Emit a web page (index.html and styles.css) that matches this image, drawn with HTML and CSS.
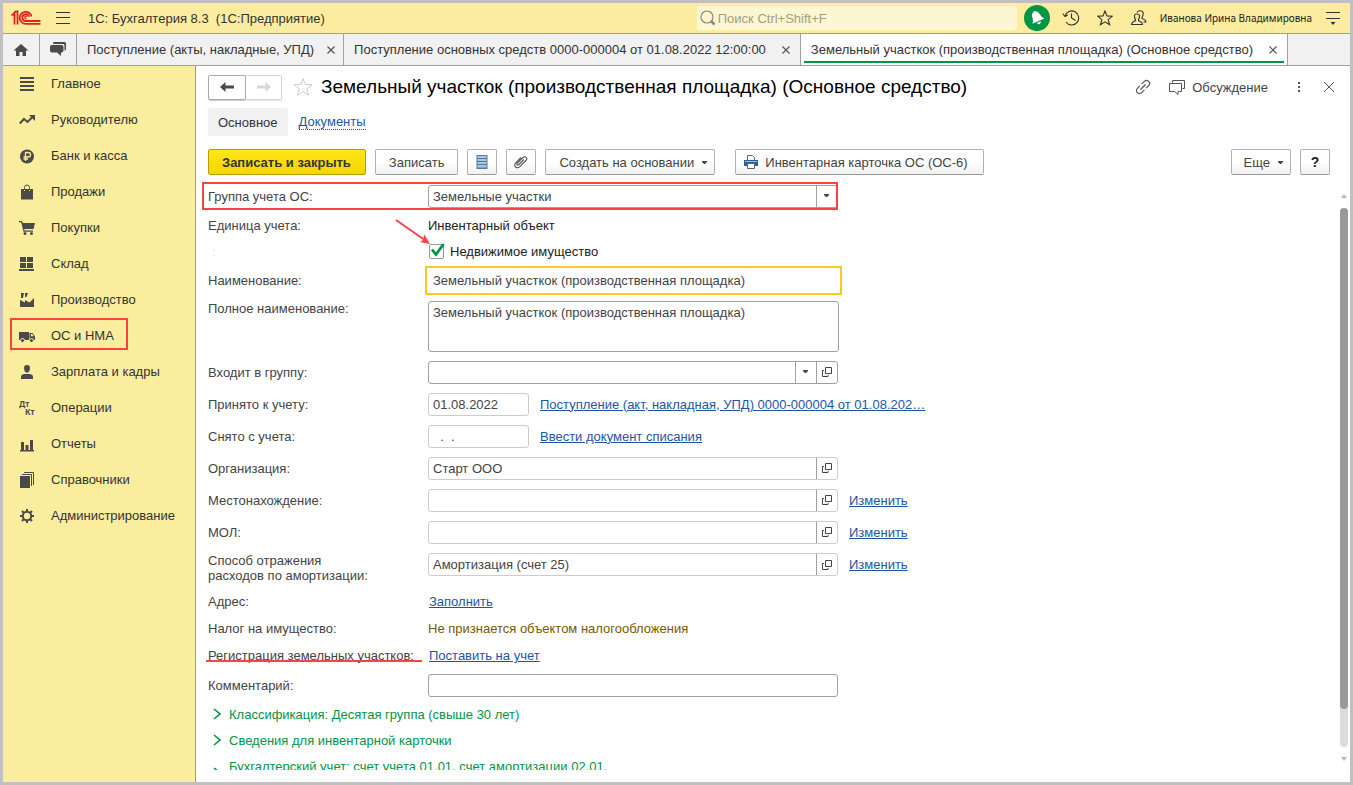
FILE: index.html
```
<!DOCTYPE html>
<html lang="ru">
<head>
<meta charset="utf-8">
<title>1С: Бухгалтерия 8.3</title>
<link rel="stylesheet" href="styles.css">
</head>
<body>
<svg class="defs" width="0" height="0" aria-hidden="true">
  <symbol id="open" viewBox="0 0 10 10"><path d="M3.500.5h6v6h-6zM2 3.500H.5v6h5.500V8" fill="none" stroke="#444"/></symbol>
  <symbol id="caret" viewBox="0 0 6 4"><path d="M0 0h5v1L3 3H2L0 1z" fill="#444"/></symbol>
  <symbol id="cross" viewBox="0 0 8 8"><path d="M.5.5l7 7M7.500.5l-7 7" fill="none" stroke="#555" stroke-width="1.200"/></symbol>
  <symbol id="chevron" viewBox="0 0 8 12"><path d="M1 1l6 5-6 5" fill="none" stroke="#009646" stroke-width="1.600"/></symbol>
</svg>
<div class="window">
  <header class="topbar">
    <svg class="logo" width="30" height="16" viewBox="0 0 30 16"><g fill="none" stroke="#e0211d" stroke-width="1.800"><path d="M.3 4.800H3.500V14.500M6.500 14.500V1.500H4.800L2 4"/><path d="M20.500 6.500A6 6 0 1 0 15 13.800h14.500M18 6.800A3.400 3.400 0 1 0 15 11h14.500"/><path d="M16 6.800a1.200 1.200 0 1 0-.5 1.700" stroke-width="1.200"/></g></svg>
    <button class="icon-btn menu" aria-label="Меню"><svg width="14" height="12" viewBox="0 0 14 12"><path d="M0 .5h14M0 5.500h14M0 11.500h14" stroke="#333"/></svg></button>
    <div class="app-name">1С: Бухгалтерия 8.3&nbsp; (1С:Предприятие)</div>
    <label class="search"><svg width="16" height="16" viewBox="0 0 16 16"><circle cx="7" cy="7" r="6" fill="none" stroke="#8d8873" stroke-width="1.200"/><path d="M11 11l3.500 3.500" stroke="#8d8873" stroke-width="2.500"/></svg><input type="text" aria-label="Поиск" placeholder="Поиск Ctrl+Shift+F"></label>
    <button class="icon-btn bell" aria-label="Уведомления"><svg width="26" height="26" viewBox="0 0 26 26"><circle cx="13" cy="13" r="13" fill="#009646"/><g fill="#fff" transform="rotate(-24 13 13)"><path d="M12 6.200q1-1.400 2 0 2.700.8 3 4.300.3 3.500 2.500 6H6.500q2.200-2.500 2.500-6 .3-3.500 3-4.300z"/><path d="M11 17.500h4q-.3 2-2 2t-2-2z"/></g></svg></button>
    <button class="icon-btn" aria-label="История"><svg width="18" height="16" viewBox="0 0 18 16"><g fill="none" stroke="#333" stroke-width="1.100"><path d="M3 6A7 7 0 1 1 4 12M9.500 3.500V8l4 2.500"/><path d="M.8 3.500L3 6.500 5.800 5"/></g></svg></button>
    <button class="icon-btn" aria-label="Избранное"><svg width="16" height="16" viewBox="0 0 16 16"><path d="M8 1l2 4.900 5.300.3-4.100 3.400 1.400 5.200L8 11.900l-4.600 2.900 1.400-5.200L.7 6.200 6 5.900z" fill="none" stroke="#333" stroke-width="1.100"/></svg></button>
    <button class="icon-btn" aria-label="Пользователь"><svg width="18" height="16" viewBox="0 0 18 16"><g fill="none" stroke="#333" stroke-width="1.100"><path d="M1.500 14.500c0-3 3-3 4-4 .5-1-1.500-2-1-5 .3-2 4.700-2 5 0 .4 3-1.500 4-1 5 1 1 4 1 4 4z"/><path d="M7 2.500c1-2.500 6-2.500 6.200.8.200 2.500-1.700 3.700-1.200 5 1 1 4 1 4 3.700h-2.500"/></g></svg></button>
    <div class="user">Иванова Ирина Владимировна</div>
    <button class="icon-btn service" aria-label="Сервис"><svg width="14" height="13" viewBox="0 0 14 13"><path d="M0 .5h14M0 6.500h14" stroke="#333"/><path d="M4.500 10h5L7 13z" fill="#333"/></svg></button>
  </header>

  <nav class="tabs" aria-label="Открытые окна">
    <button class="tab-icon" aria-label="Домой"><svg width="16" height="14" viewBox="0 0 16 14"><path d="M8 1l7.500 6.500H13V13H9.500V9h-3v4H3V7.500H.5z" fill="#4a4a4a"/></svg></button>
    <button class="tab-icon" aria-label="Обсуждения"><svg width="18" height="15" viewBox="0 0 18 15"><path d="M5 0h10.500Q17 0 17 1.500V7q0 1.500-1.500 1.500V3.500Q15.500 2 14 2H4q0-2 1-2z" fill="#4a4a4a"/><path d="M3 3h9.500q2 0 2 2v3.500q0 2-2 2H12V14L8 10.500H3q-2 0-2-2V5q0-2 2-2z" fill="#4a4a4a"/></svg></button>
    <div class="tab short"><span>Поступление (акты, накладные, УПД)</span><button aria-label="Закрыть"><svg width="8" height="8"><use href="#cross"/></svg></button></div>
    <div class="tab"><span>Поступление основных средств 0000-000004 от 01.08.2022 12:00:00</span><button aria-label="Закрыть"><svg width="8" height="8"><use href="#cross"/></svg></button></div>
    <div class="tab active"><span>Земельный участкок (производственная площадка) (Основное средство)</span><button aria-label="Закрыть"><svg width="8" height="8"><use href="#cross"/></svg></button></div>
  </nav>

  <div class="body">
    <nav class="sidebar" aria-label="Разделы">
      <a href="#"><svg viewBox="0 0 16 16"><path d="M1 1h14v2H1zM1 5h14v2H1zM1 9h14v2H1zM1 13h14v2H1z"/></svg>Главное</a>
      <a href="#"><svg viewBox="0 0 16 16"><path d="M.8 11.500L5 7l3.500 3 5-5" fill="none" stroke="#4a4a4a" stroke-width="2"/><path d="M10 3h6v6z"/></svg>Руководителю</a>
      <a href="#"><svg viewBox="0 0 16 16"><circle cx="8" cy="8.500" r="7"/><path d="M6.500 13V4.500h2.800a2.200 2.200 0 0 1 0 4.500H4.500M4.500 11H9" fill="none" stroke="#fbed9e" stroke-width="1.300"/></svg>Банк и касса</a>
      <a href="#"><svg viewBox="0 0 16 16"><path d="M2 5h3v2h1V5h4v2h1V5h3v10.500H2z"/><path d="M5.500 6V3.500a2.500 2.500 0 0 1 5 0V6" fill="none" stroke="#4a4a4a"/></svg>Продажи</a>
      <a href="#"><svg viewBox="0 0 16 16"><path d="M0 1h3l.8 2H16l-1.500 6H5.200l.4 1.500H14v1.200H4.500L2.200 2.200H0z"/><circle cx="6" cy="13.500" r="1.500"/><circle cx="12.500" cy="13.500" r="1.500"/></svg>Покупки</a>
      <a href="#"><svg viewBox="0 0 16 16"><path d="M1 1h6v5H1zM8 1h6v5H8zM1 7h6v5H1zM8 7h6v5H8zM0 13h15v2H0z"/></svg>Склад</a>
      <a href="#"><svg viewBox="0 0 16 16"><path d="M1 15V8l5 2.500V8l4.500 2.500L15 6v9zM2 1h3l-1 5H2zM6 1h3L7.500 5H6z"/></svg>Производство</a>
      <a href="#" class="marked"><svg viewBox="0 0 16 16"><path d="M0 4h10v8H0zM10.500 5h3L16 8.500V12h-5.500z"/><path d="M12 6h1.300l1.500 2.300H12z" fill="#fbed9e"/><g stroke="#fbed9e"><circle cx="3.500" cy="12.500" r="2"/><circle cx="12.500" cy="12.500" r="2"/></g></svg>ОС и НМА</a>
      <a href="#"><svg viewBox="0 0 16 16"><path d="M5 4q0-3 3-3t3 3q0 3-2 4.500H7Q5 7 5 4zM2 15v-2q0-3 4-3h4q4 0 4 3v2z"/></svg>Зарплата и кадры</a>
      <a href="#"><svg viewBox="0 0 16 16"><g class="dtkt"><text x="0" y="7">Дт</text><text x="6" y="15">Кт</text></g></svg>Операции</a>
      <a href="#"><svg viewBox="0 0 16 16"><path d="M1 14h14v1.500H1zM2 6h3v8H2zM6.500 9h3v5h-3zM11 4h3v10h-3z"/></svg>Отчеты</a>
      <a href="#"><svg viewBox="0 0 16 16"><path d="M1 4h10v12H1z"/><path d="M3 2.500h9.500V14M5 .5h9.500V13" fill="none" stroke="#4a4a4a"/></svg>Справочники</a>
      <a href="#"><svg viewBox="0 0 16 16"><circle cx="8" cy="8" r="4.200" fill="none" stroke="#4a4a4a" stroke-width="2"/><path d="M8 1v3M8 12v3M1 8h3M12 8h3M3 3l2 2M11 11l2 2M13 3l-2 2M5 11l-2 2" stroke="#4a4a4a" stroke-width="2"/></svg>Администрирование</a>
    </nav>

    <main class="main">
      <div class="heading">
        <div class="history"><button aria-label="Назад"><svg width="14" height="10" viewBox="0 0 14 10"><path d="M0 5l5.500-5v3.500H14v3H5.500V10z" fill="#4a4a4a"/></svg></button><button class="off" aria-label="Вперед"><svg width="14" height="10" viewBox="0 0 14 10"><path d="M14 5L8.500 0v3.500H0v3h8.500V10z" fill="#d8d8d8"/></svg></button></div>
        <button class="icon-btn" aria-label="В избранное"><svg width="20" height="20" viewBox="0 0 20 20"><path d="M10 1.500l2.300 6 6.700.2-5.200 4 1.800 6.500-5.600-3.700-5.600 3.700 1.800-6.500-5.200-4 6.700-.2z" fill="none" stroke="#ccc"/></svg></button>
        <h1>Земельный участкок (производственная площадка) (Основное средство)</h1>
        <div class="tools">
          <button class="icon-btn" aria-label="Ссылка"><svg width="16" height="16" viewBox="0 0 16 16"><g fill="none" stroke="#555" stroke-width="1.200" transform="rotate(-45 8 8)"><path d="M7 11H3a3 3 0 0 1 0-6h3.500M9 5h4a3 3 0 0 1 0 6H9.500M4.500 8h7"/></g></svg></button>
          <button class="talk"><svg width="16" height="15" viewBox="0 0 16 15"><path d="M3.500 2.500V.5h12v8h-2M.5 3.500h12v8H9v3l-3.500-3h-5z" fill="none" stroke="#555"/></svg>Обсуждение</button>
          <button class="icon-btn dots" aria-label="Еще"><svg width="4" height="12" viewBox="0 0 4 12"><path d="M1 1h2v2H1zM1 5h2v2H1zM1 9h2v2H1z" fill="#555"/></svg></button>
          <button class="icon-btn" aria-label="Закрыть"><svg width="10" height="10" viewBox="0 0 10 10"><path d="M0 0l10 10M10 0L0 10" stroke="#555"/></svg></button>
        </div>
      </div>

      <div class="views"><button>Основное</button><a href="#">Документы</a></div>

      <div class="toolbar">
        <button class="btn primary">Записать и закрыть</button>
        <button class="btn">Записать</button>
        <button class="btn square" aria-label="Список"><svg width="12" height="14" viewBox="0 0 12 14"><path d="M.5 0h11v14H.5z" fill="#56789a"/><path d="M1.500 1h9v2h-9zM1.500 4h9v2h-9zM1.500 7h9v2h-9zM1.500 10h9v2.500h-9z" fill="#a9c7e0"/></svg></button>
        <button class="btn square" aria-label="Файлы"><svg width="14" height="14" viewBox="0 0 14 14"><path d="M10 4.500L5 9.500q-1 1-1.800.2T3.500 8L9 2.500q1.800-1.500 3.200-.2T12 5.500l-6.500 6.300q-2 1.700-3.800.2T1.500 8l5.500-5.500" fill="none" stroke="#555" stroke-width="1.100"/></svg></button>
        <button class="btn create">Создать на основании<svg width="6" height="4"><use href="#caret"/></svg></button>
        <button class="btn card"><svg width="14" height="14" viewBox="0 0 14 14"><path d="M3.500 5V.5h5l2 2V5" fill="#fff" stroke="#567"/><path d="M0 5h14v6H0z" fill="#2f5f8f"/><path d="M1 6h12v1H1z" fill="#9bbcd8"/><path d="M3.500 8.500h7v5h-7z" fill="#fff" stroke="#567"/></svg>Инвентарная карточка ОС (ОС-6)</button>
        <button class="btn more">Еще<svg width="6" height="4"><use href="#caret"/></svg></button>
        <button class="btn help">?</button>
      </div>

      <div class="scroll-area">
        <form class="form">
          <div class="row framed"><label for="grp">Группа учета ОС:</label><div class="field"><select id="grp"><option>Земельные участки</option></select><span class="cell"><svg width="6" height="4"><use href="#caret"/></svg></span></div></div>
          <div class="row unit"><span class="label">Единица учета:</span><span class="dark">Инвентарный объект</span></div>
          <div class="row check"><span class="label faint">:</span><span class="tick"><input type="checkbox" id="realty" checked><svg width="14" height="14" viewBox="0 0 14 14"><path d="M1 6.500l4 5L12.500 1" fill="none" stroke="#009646" stroke-width="2.800"/></svg></span><label class="dark" for="realty">Недвижимое имущество</label><svg class="arrow" width="36" height="28" viewBox="0 0 36 28"><path d="M1 1l28 19.500" stroke="#f94444" stroke-width="2"/><path d="M35 25l-10-2 3.500-2.500L29 15z" fill="#f94444"/></svg></div>
          <div class="row name"><label for="name">Наименование:</label><input class="focused" id="name" type="text" value="Земельный участкок (производственная площадка)"></div>
          <div class="row full"><label for="full">Полное наименование:</label><textarea id="full">Земельный участкок (производственная площадка)</textarea></div>
          <div class="row"><label for="parent">Входит в группу:</label><div class="field"><input id="parent" type="text"><button type="button" class="cell" aria-label="Выбрать"><svg width="6" height="4"><use href="#caret"/></svg></button><button type="button" class="cell" aria-label="Открыть"><svg width="10" height="10"><use href="#open"/></svg></button></div></div>
          <div class="row"><label for="in">Принято к учету:</label><input class="date" id="in" type="text" value="01.08.2022"><a href="#">Поступление (акт, накладная, УПД) 0000-000004 от 01.08.202…</a></div>
          <div class="row"><label for="out">Снято с учета:</label><input class="date" id="out" type="text" value="&nbsp; .&nbsp; ."><a href="#">Ввести документ списания</a></div>
          <div class="row"><label for="org">Организация:</label><div class="field pale"><input id="org" type="text" value="Старт ООО"><button type="button" class="cell" aria-label="Открыть"><svg width="10" height="10"><use href="#open"/></svg></button></div></div>
          <div class="row"><label for="place">Местонахождение:</label><div class="field pale"><input id="place" type="text"><button type="button" class="cell" aria-label="Открыть"><svg width="10" height="10"><use href="#open"/></svg></button></div><a href="#">Изменить</a></div>
          <div class="row"><label for="mol">МОЛ:</label><div class="field pale"><input id="mol" type="text"><button type="button" class="cell" aria-label="Открыть"><svg width="10" height="10"><use href="#open"/></svg></button></div><a href="#">Изменить</a></div>
          <div class="row tall"><label for="way">Способ отражения<br>расходов по амортизации:</label><div class="field pale"><input id="way" type="text" value="Амортизация (счет 25)"><button type="button" class="cell" aria-label="Открыть"><svg width="10" height="10"><use href="#open"/></svg></button></div><a href="#">Изменить</a></div>
          <div class="row low"><span class="label">Адрес:</span><a class="first" href="#">Заполнить</a></div>
          <div class="row low"><span class="label">Налог на имущество:</span><span class="tax">Не признается объектом налогообложения</span></div>
          <div class="row low"><span class="label underlined">Регистрация земельных участков:</span><a class="first" href="#">Поставить на учет</a></div>
          <div class="row"><label for="note">Комментарий:</label><div class="field"><input id="note" type="text"></div></div>
          <button type="button" class="group"><svg width="8" height="12"><use href="#chevron"/></svg>Классификация: Десятая группа (свыше 30 лет)</button>
          <button type="button" class="group"><svg width="8" height="12"><use href="#chevron"/></svg>Сведения для инвентарной карточки</button>
          <button type="button" class="group opening"><svg width="8" height="12"><use href="#chevron"/></svg>Бухгалтерский учет: счет учета 01.01, счет амортизации 02.01,</button>
        </form>
        <div class="scrollbar" aria-hidden="true"><svg width="6" height="4" viewBox="0 0 6 4"><path d="M0 4l3-4 3 4z" fill="#b8b8b8"/></svg><div class="track"><div class="thumb"></div></div><svg width="6" height="4" viewBox="0 0 6 4"><path d="M0 0l3 4 3-4z" fill="#b8b8b8"/></svg></div>
      </div>
    </main>
  </div>
</div>
</body>
</html>
```

FILE: styles.css
```
*, *::before, *::after { box-sizing: border-box; }
body { margin: 0; font: 13px/15px "Liberation Sans", Arial, sans-serif; color: #444; }
button, input, select, textarea { font: inherit; color: inherit; margin: 0; }
button { background: none; border: 0; padding: 0; }
svg { display: block; flex: none; }
.defs { position: absolute; }

.window { height: 100vh; display: flex; flex-direction: column; border: 3px solid #c0c0c0; background: #fff; overflow: hidden; }

.topbar { flex: none; display: flex; align-items: center; height: 31px; padding-right: 10px; background: #fbec9f; border-bottom: 1px solid #a8a07a; }
.logo { margin-left: 8px; }
.icon-btn { display: flex; align-items: center; justify-content: center; flex: none; }
.menu { margin: 0 18px 0 15px; }
.app-name { flex: 1; color: #333; white-space: nowrap; }
.search { display: flex; align-items: center; gap: 2px; width: 320px; height: 24px; padding-left: 3px; background: #fdf6d3; border-radius: 2px; }
.search input { flex: 1; min-width: 0; border: 0; background: none; padding: 0; outline: 0; }
.search input::placeholder { color: #a29d85; opacity: 1; }
.bell { margin: 0 12px 0 7px; }
.bell + .icon-btn { margin-right: 17px; }
.bell + .icon-btn + .icon-btn { margin-right: 17px; }
.user { margin: 0 14px 0 12px; font: 10px/15px "Noto Sans", sans-serif; color: #222; white-space: nowrap; }

.tabs { flex: none; display: flex; height: 32px; background: #f1f1f1; border-bottom: 1px solid #a0a0a0; }
.tab-icon { display: flex; align-items: center; justify-content: center; width: 37px; border-right: 1px solid #a0a0a0; }
.tab { position: relative; flex: 0 1 auto; display: flex; align-items: center; gap: 16px; padding: 0 10px; border-right: 1px solid #a0a0a0; white-space: nowrap; color: #333; }
.tab.short { gap: 13px; padding-right: 8px; }
.tab.active { background: #fff; }
.tab.active::after { content: ""; position: absolute; left: 3px; right: 3px; bottom: 2px; height: 2px; background: #009646; }

.body { flex: 1; min-height: 0; display: flex; }
.sidebar { flex: none; width: 193px; background: #fbed9e; border-right: 1px solid #a39a6c; }
.sidebar a { position: relative; display: flex; align-items: center; gap: 16px; height: 36px; padding: 0 0 2px 16px; color: #333; text-decoration: none; }
.sidebar svg { width: 16px; height: 16px; margin-top: 2px; fill: #4a4a4a; }
.dtkt { font: bold 8px "Noto Sans", sans-serif; }
.marked::after { content: ""; position: absolute; left: 7px; top: 0; width: 118px; height: 32px; border: 2px solid #f94444; }

.main { flex: 1; min-width: 0; display: flex; flex-direction: column; padding: 0 2px 12px 12px; }
.heading { flex: none; display: flex; align-items: center; height: 42px; gap: 11px; }
.history { display: flex; }
.history button { display: flex; align-items: center; justify-content: center; width: 38px; height: 25px; border: 1px solid #aaa; border-radius: 2px; box-shadow: 0 1px 0 #ccc; }
.history .off { width: 37px; margin-left: -1px; border-color: #d5d5d5; border-left-color: #aaa; box-shadow: 0 1px 0 #e5e5e5; }
h1 { flex: 1; margin: 0 0 0 -3px; font-size: 19px; line-height: 24px; font-weight: normal; color: #000; white-space: nowrap; }
.tools { display: flex; align-items: center; padding-right: 14px; gap: 18px; }
.talk { display: flex; align-items: center; gap: 7px; }
.dots { margin: 0 5px 0 11px; }

.views { flex: none; display: flex; align-items: center; gap: 11px; height: 28px; }
.views button { height: 28px; padding: 0 10px; background: #f1f1f1; border-radius: 3px; color: #333; }
a { color: #1d56a8; }
.views a { text-decoration: none; border-bottom: 1px dotted #1d56a8; }

.toolbar { flex: none; display: flex; gap: 9px; padding: 13px 18px 7px 0; }
.btn { display: flex; align-items: center; justify-content: center; height: 26px; padding: 0 13px; border: 1px solid #b0b0b0; border-bottom-color: #999; border-radius: 2px; background: linear-gradient(#fff 50%, #f0f0f0); white-space: nowrap; }
.primary { padding: 0 14px 0 13px; border-color: #b59e00; background: linear-gradient(#ffe617, #f5d500); font-weight: bold; color: #333; }
.square, .help { width: 30px; padding: 0; }
.create, .more { gap: 8px; padding: 0 6px 0 13px; }
.create svg, .more svg { margin-top: 2px; }
.card { gap: 7px; margin-left: 11px; padding: 0 15px 0 8px; }
.more { margin-left: auto; padding-left: 12px; }
.help { font-size: 14px; font-weight: bold; color: #222; }

.scroll-area { flex: 1; min-height: 0; display: flex; justify-content: space-between; margin-left: -6px; }
.form { flex: 1; min-width: 0; overflow: hidden; }
.row { position: relative; display: flex; align-items: center; height: 32px; padding-left: 6px; }
.row > label:first-child, .label { flex: none; width: 220px; }
.row > a { margin-left: 11px; white-space: nowrap; }
.row > a.first { margin-left: 1px; }
.framed { width: 636px; height: 28px; }
.framed::after { content: ""; position: absolute; inset: 0; border: 2px solid #f94444; pointer-events: none; }
.unit { height: 30px; }
.check { height: 23px; }
.name { height: 33px; padding-top: 2px; }
.full { height: 60px; align-items: flex-start; padding-top: 5px; }
.tall { height: 40px; align-items: flex-start; padding-top: 5px; }
.tall > a { margin-top: 4px; }
.low { height: 27px; }
.dark { color: #222; }
.tax { color: #7a5900; }
.faint { padding-left: 4px; color: #efe6b8; }

.field { flex: none; display: flex; width: 410px; height: 23px; border: 1px solid #a0a0a0; border-radius: 3px; background: #fff; }
.field input, .field select { flex: 1; min-width: 0; appearance: none; border: 0; padding: 0 4px; background: none; outline: 0; }
.cell { display: flex; align-items: center; justify-content: center; width: 21px; border-left: 1px solid #a0a0a0; }
.pale { border-color: #ccc; }
.date { width: 101px; height: 23px; border: 1px solid #ccc; border-radius: 3px; padding: 0 4px; }
.focused { width: 417px; height: 29px; margin-left: -3px; padding: 0 6px; border: 2px solid #fac81e; outline: 0; }
textarea { width: 411px; height: 51px; padding: 3px 4px; border: 1px solid #a0a0a0; border-radius: 3px; resize: none; }
.tick { position: relative; width: 22px; height: 15px; padding-left: 1px; }
.tick input { display: block; appearance: none; width: 15px; height: 15px; border: 1px solid #999; border-radius: 2px; }
.tick svg { position: absolute; left: 3px; top: -1px; pointer-events: none; }
.arrow { position: absolute; left: 193px; top: -21px; }
.underlined { position: relative; }
.underlined::after { content: ""; position: absolute; left: -2px; right: 6px; bottom: 1px; height: 2px; background: #f94444; }
.group { display: flex; align-items: center; gap: 8px; height: 26px; padding-left: 11px; color: #009646; white-space: nowrap; }
.opening svg { margin-top: 14px; }

.scrollbar { flex: none; display: flex; flex-direction: column; align-items: center; gap: 10px; width: 8px; margin-bottom: 9px; padding-top: 12px; }
.track { flex: 1; width: 8px; border-radius: 4px; background: #dcdcdc; }
.thumb { height: 93%; border-radius: 4px; background: #999; }
```
